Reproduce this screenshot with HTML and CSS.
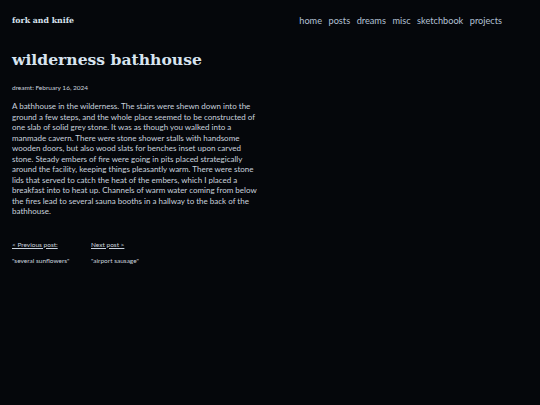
FILE: index.html
```html
<!DOCTYPE html>
<html lang="en">
<head>
<meta charset="utf-8">
<title>wilderness bathhouse</title>
<link rel="stylesheet" href="styles.css">
</head>
<body>
<header class="site-header">
  <a class="brand" href="#">fork and knife</a>
  <nav class="nav">
    <a href="#">home</a>
    <a href="#">posts</a>
    <a href="#">dreams</a>
    <a href="#">misc</a>
    <a href="#">sketchbook</a>
    <a href="#">projects</a>
  </nav>
</header>
<main class="post">
  <h1 class="post-title">wilderness bathhouse</h1>
  <p class="meta">dreamt: February 16, 2024</p>
  <p class="body-text">A bathhouse in the wilderness. The stairs were shewn down into the ground a few steps, and the whole place seemed to be constructed of one slab of solid grey stone. It was as though you walked into a manmade cavern. There were stone shower stalls with handsome wooden doors, but also wood slats for benches inset upon carved stone. Steady embers of fire were going in pits placed strategically around the facility, keeping things pleasantly warm. There were stone lids that served to catch the heat of the embers, which I placed a breakfast into to heat up. Channels of warm water coming from below the fires lead to several sauna booths in a hallway to the back of the bathhouse.</p>
  <div class="pager">
    <div class="pager-col">
      <a href="#">&lt; Previous post:</a>
      <a href="#">"several sunflowers"</a>
    </div>
    <div class="pager-col">
      <a href="#">Next post &gt;</a>
      <a href="#">"airport sausage"</a>
    </div>
  </div>
</main>
</body>
</html>
```
FILE: styles.css
```css
html, body {
  margin: 0;
  padding: 0;
  background: #05070b;
}
body {
  font-family: "Lato", "Open Sans", sans-serif;
  color: #c9d2de;
  padding: 0 12px;
}
a { color: inherit; }
.site-header {
  width: 490px;
  display: flex;
  justify-content: space-between;
  align-items: center;
  padding-top: 13px;
  height: 14px;
}
.brand {
  font-family: "DejaVu Serif", serif;
  font-weight: bold;
  font-size: 7.8px;
  color: #d8e2ee;
  text-decoration: none;
}
.nav {
  display: flex;
  gap: 6.5px;
  font-size: 9.2px;
}
.nav a {
  text-decoration: none;
  color: #b2c0d4;
}
.post {
  width: 248px;
}
.post-title {
  font-family: "DejaVu Serif", serif;
  font-weight: bold;
  font-size: 15.6px;
  color: #d8e4f0;
  margin: 23px 0 0;
  letter-spacing: 0;
}
.meta {
  font-size: 6.5px;
  margin: 15px 0 0;
}
.body-text {
  font-size: 8px;
  line-height: 10.5px;
  margin: 10px 0 0;
}
.pager {
  display: flex;
  margin-top: 24px;
  font-size: 6.5px;
}
.pager-col {
  width: 79px;
  display: flex;
  flex-direction: column;
  gap: 9px;
}
.pager-col a {
  text-decoration: underline;
}
```
